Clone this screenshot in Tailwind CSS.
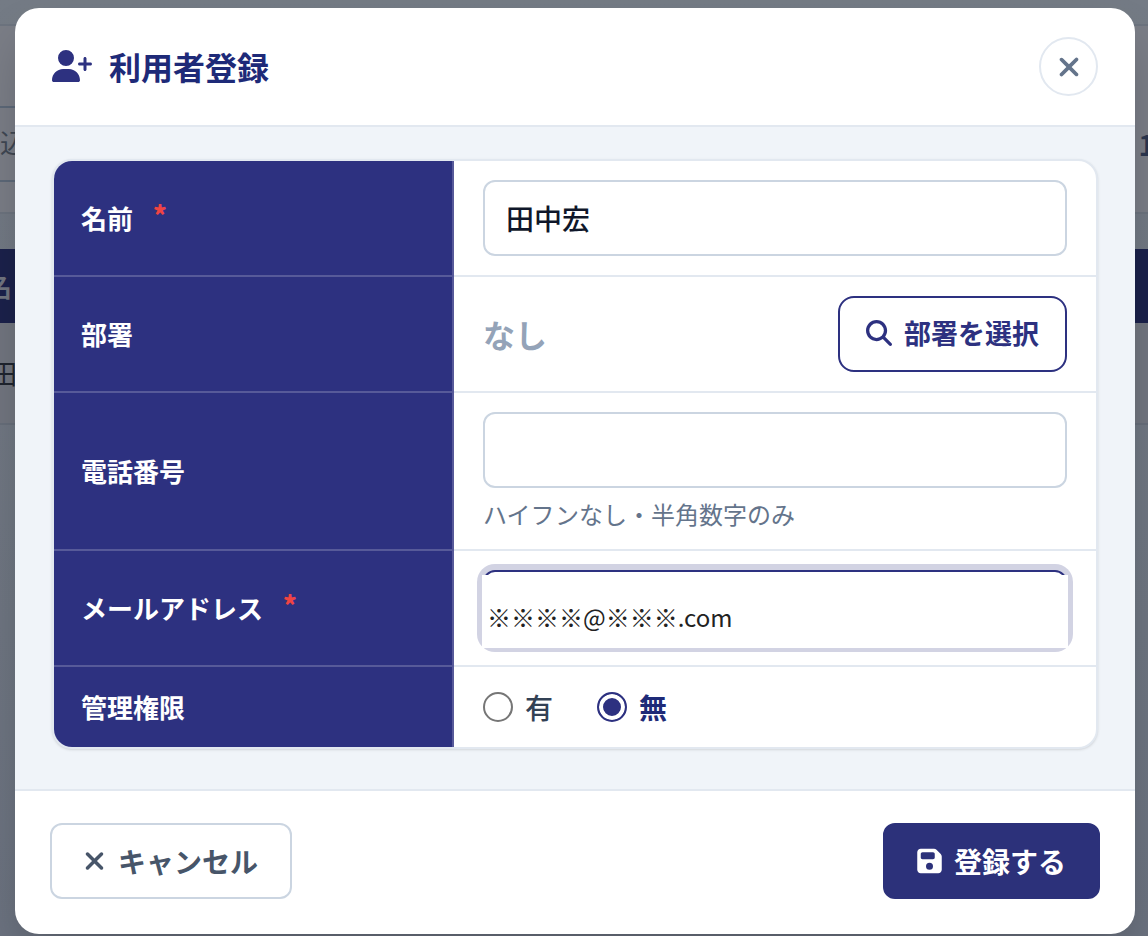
<!DOCTYPE html>
<html lang="ja">
<head>
<meta charset="utf-8">
<meta name="viewport" content="width=device-width, initial-scale=1">
<title>利用者登録</title>
<script src="https://cdn.jsdelivr.net/npm/@tailwindcss/browser@4"></script>
</head>
<body class="relative min-h-screen overflow-hidden bg-[#6e7580] font-['Noto_Sans_CJK_JP',sans-serif]">

<!-- Dimmed page behind the dialog -->
<div class="absolute inset-0 flex flex-col overflow-hidden bg-linear-to-b from-[#747b85] to-[#6b727f] text-[28px] leading-10" aria-hidden="true">
  <div class="h-6 shrink-0"></div>
  <div class="flex h-[190px] shrink-0 flex-col border-y-2 border-[#6c737e] bg-[#7a7d86]">
    <div class="h-20"></div>
    <div class="flex h-[76px] items-center justify-between">
      <span class="flex h-full w-60 items-center border-y-2 border-[#5c6878] pb-1 text-[26px] text-[#3f4753]">込</span>
      <span class="-mr-[7px] text-[28px] font-bold text-[#2b3650]">1</span>
    </div>
  </div>
  <div class="h-[35px] shrink-0"></div>
  <div class="flex h-[74px] shrink-0 items-center bg-[#1b214b] text-[26px] font-bold text-[#717580]"><span class="-ml-[14px]">名</span></div>
  <div class="flex h-[102px] shrink-0 items-center border-b-2 border-[#676e7a] bg-[#71757f] text-[26px] text-[#1f242e]"><span class="-ml-[9px]">田</span></div>
</div>

<main class="relative pt-2 pr-[13px] pl-[15px]">
  <form role="dialog" aria-labelledby="dialog-title" class="overflow-hidden rounded-3xl bg-white shadow-2xl">
    <header class="flex items-center justify-between border-b-2 border-[#e2e8f0] px-[37px] py-[29px]">
      <h1 id="dialog-title" class="flex items-center gap-[17px] pb-[2px] text-[32px] leading-10 font-bold text-[#1e2a78]">
        <svg class="h-8 w-10 fill-[#2d3180]" viewBox="0 0 640 512" aria-hidden="true"><path d="M96 128a128 128 0 1 1 256 0A128 128 0 1 1 96 128zM0 482.300C0 383.800 79.800 304 178.300 304h91.400C368.200 304 448 383.800 448 482.300c0 16.400-13.300 29.700-29.700 29.700H29.700C13.300 512 0 498.700 0 482.300zM504 312V248H440c-13.300 0-24-10.700-24-24s10.700-24 24-24h64V136c0-13.300 10.700-24 24-24s24 10.700 24 24v64h64c13.300 0 24 10.700 24 24s-10.700 24-24 24H552v64c0 13.300-10.700 24-24 24s-24-10.700-24-24z"/></svg>
        利用者登録
      </h1>
      <button type="button" aria-label="閉じる" class="flex size-[59px] items-center justify-center rounded-full border-2 border-[#e2e8f0] bg-white">
        <svg class="h-[30px] w-6 fill-[#64748b]" viewBox="0 0 384 512" aria-hidden="true"><path d="M342.600 150.600c12.500-12.500 12.500-32.800 0-45.300s-32.800-12.500-45.300 0L192 210.700 86.600 105.400c-12.500-12.500-32.800-12.500-45.300 0s-12.500 32.800 0 45.300L146.700 256 41.400 361.400c-12.500 12.500-12.500 32.800 0 45.300s32.800 12.500 45.300 0L192 301.300 297.400 406.600c12.500 12.500 32.800 12.500 45.300 0s12.500-32.800 0-45.300L237.300 256 342.600 150.600z"/></svg>
      </button>
    </header>

    <div class="bg-[#f0f4f9] px-[37px] pt-8 pb-10">
      <div class="overflow-hidden rounded-[20px] border-2 border-[#e2e8f0] bg-white shadow">
        <table class="w-full border-separate border-spacing-0 text-left">
          <tbody>
            <tr>
              <th scope="row" class="w-[400px] border-r-2 border-b-2 border-r-[#575a99] border-b-[#575a99] bg-[#2d3180] px-[27px] text-[26px] leading-10 font-bold text-white"><label for="name" class="flex items-start gap-5">名前<span class="leading-8 font-black text-[#ef4444]">*</span></label></th>
              <td class="border-b-2 border-[#e2e8f0] px-[29px] py-[19px]">
                <input id="name" type="text" value="田中宏" required class="block h-[76px] w-full rounded-xl border-2 border-[#cbd5e1] bg-white px-[21px] text-[28px] font-medium text-[#0f172a] outline-none">
              </td>
            </tr>
            <tr>
              <th scope="row" class="border-r-2 border-b-2 border-r-[#575a99] border-b-[#575a99] bg-[#2d3180] px-[27px] text-[26px] leading-10 font-bold text-white">部署</th>
              <td class="border-b-2 border-[#e2e8f0] px-[29px] py-[19px]">
                <div class="flex items-center justify-between">
                  <span class="text-[32px] leading-10 font-bold text-[#94a3b8]">なし</span>
                  <button type="button" class="flex h-[76px] items-center gap-3 rounded-2xl border-2 border-[#2d3180] bg-white px-[26px] pb-[3px] text-[27px] leading-10 font-bold text-[#2d3180]">
                    <svg class="size-[26px] fill-current" viewBox="0 0 512 512" aria-hidden="true"><path d="M416 208c0 45.900-14.900 88.300-40 122.700L502.600 457.400c12.500 12.500 12.500 32.800 0 45.300s-32.800 12.500-45.300 0L330.700 376c-34.400 25.200-76.800 40-122.700 40C93.100 416 0 322.900 0 208S93.100 0 208 0S416 93.100 416 208zM208 352a144 144 0 1 0 0-288 144 144 0 1 0 0 288z"/></svg>
                    部署を選択
                  </button>
                </div>
              </td>
            </tr>
            <tr>
              <th scope="row" class="border-r-2 border-b-2 border-r-[#575a99] border-b-[#575a99] bg-[#2d3180] px-[27px] text-[26px] leading-10 font-bold text-white"><label for="tel">電話番号</label></th>
              <td class="border-b-2 border-[#e2e8f0] px-[29px] py-[19px]">
                <input id="tel" type="tel" aria-describedby="tel-hint" class="block h-[76px] w-full rounded-xl border-2 border-[#cbd5e1] bg-white px-[21px] text-[28px] text-[#0f172a] outline-none">
                <p id="tel-hint" class="mt-[10px] text-2xl leading-8 text-[#64748b]">ハイフンなし・半角数字のみ</p>
              </td>
            </tr>
            <tr>
              <th scope="row" class="border-r-2 border-b-2 border-r-[#575a99] border-b-[#575a99] bg-[#2d3180] px-[27px] text-[26px] leading-10 font-bold text-white"><label for="email" class="flex items-start gap-5">メールアドレス<span class="leading-8 font-black text-[#ef4444]">*</span></label></th>
              <td class="border-b-2 border-[#e2e8f0] px-[29px] py-[19px]">
                <div class="relative h-[76px] rounded-xl border-2 border-[#2d3180] bg-white ring-6 ring-[#d2d3e3]">
                  <input id="email" type="text" inputmode="email" value="※※※※@※※※.com" required class="absolute -inset-x-[3px] top-[3px] h-[73px] bg-white pt-[9px] pl-[5px] text-2xl text-[#222222] outline-none">
                </div>
              </td>
            </tr>
            <tr>
              <th scope="row" id="admin-label" class="border-r-2 border-r-[#575a99] bg-[#2d3180] px-[27px] text-[26px] leading-10 font-bold text-white">管理権限</th>
              <td class="px-[29px] py-5">
                <div role="radiogroup" aria-labelledby="admin-label" class="flex items-center gap-11 text-[28px] leading-10">
                  <label class="flex items-center gap-3 font-medium text-[#334155]"><input type="radio" name="admin" value="1" class="size-[30px] appearance-none rounded-full border-2 border-[#767676] bg-white">有</label>
                  <label class="flex items-center gap-3 font-bold text-[#1e2a78]"><input type="radio" name="admin" value="0" checked class="size-[30px] appearance-none rounded-full border-2 border-[#2d3180] bg-[#2d3180] shadow-[inset_0_0_0_4px_#fff]">無</label>
                </div>
              </td>
            </tr>
          </tbody>
        </table>
      </div>
    </div>

    <footer class="flex items-center justify-between border-t-2 border-[#e2e8f0] px-[35px] pt-8 pb-[35px]">
      <button type="button" class="flex h-[76px] items-center gap-[13px] rounded-xl border-2 border-[#cbd5e1] bg-white px-8 text-[28px] leading-10 font-bold text-[#475569]">
        <svg class="h-7 w-[21px] fill-current" viewBox="0 0 384 512" aria-hidden="true"><path d="M342.600 150.600c12.500-12.500 12.500-32.800 0-45.300s-32.800-12.500-45.300 0L192 210.700 86.600 105.400c-12.500-12.500-32.800-12.500-45.300 0s-12.500 32.800 0 45.300L146.700 256 41.400 361.400c-12.500 12.500-12.500 32.800 0 45.300s32.800 12.500 45.300 0L192 301.300 297.400 406.600c12.500 12.500 32.800 12.500 45.300 0s12.500-32.800 0-45.300L237.300 256 342.600 150.600z"/></svg>
        キャンセル
      </button>
      <button type="submit" class="flex h-[76px] items-center gap-3 rounded-xl border-2 border-[#2c317a] bg-[#2c317a] px-8 text-[28px] leading-10 font-bold text-white">
        <svg class="h-7 w-[25px] fill-current" viewBox="0 0 448 512" aria-hidden="true"><path d="M64 32C28.700 32 0 60.700 0 96V416c0 35.300 28.700 64 64 64H384c35.300 0 64-28.700 64-64V173.300c0-17-6.700-33.300-18.700-45.300L352 50.700C340 38.700 323.700 32 306.700 32H64zm0 96c0-17.700 14.300-32 32-32H288c17.700 0 32 14.300 32 32v64c0 17.700-14.300 32-32 32H96c-17.700 0-32-14.300-32-32V128zM224 288a64 64 0 1 1 0 128 64 64 0 1 1 0-128z"/></svg>
        登録する
      </button>
    </footer>
  </form>
</main>
</body>
</html>
